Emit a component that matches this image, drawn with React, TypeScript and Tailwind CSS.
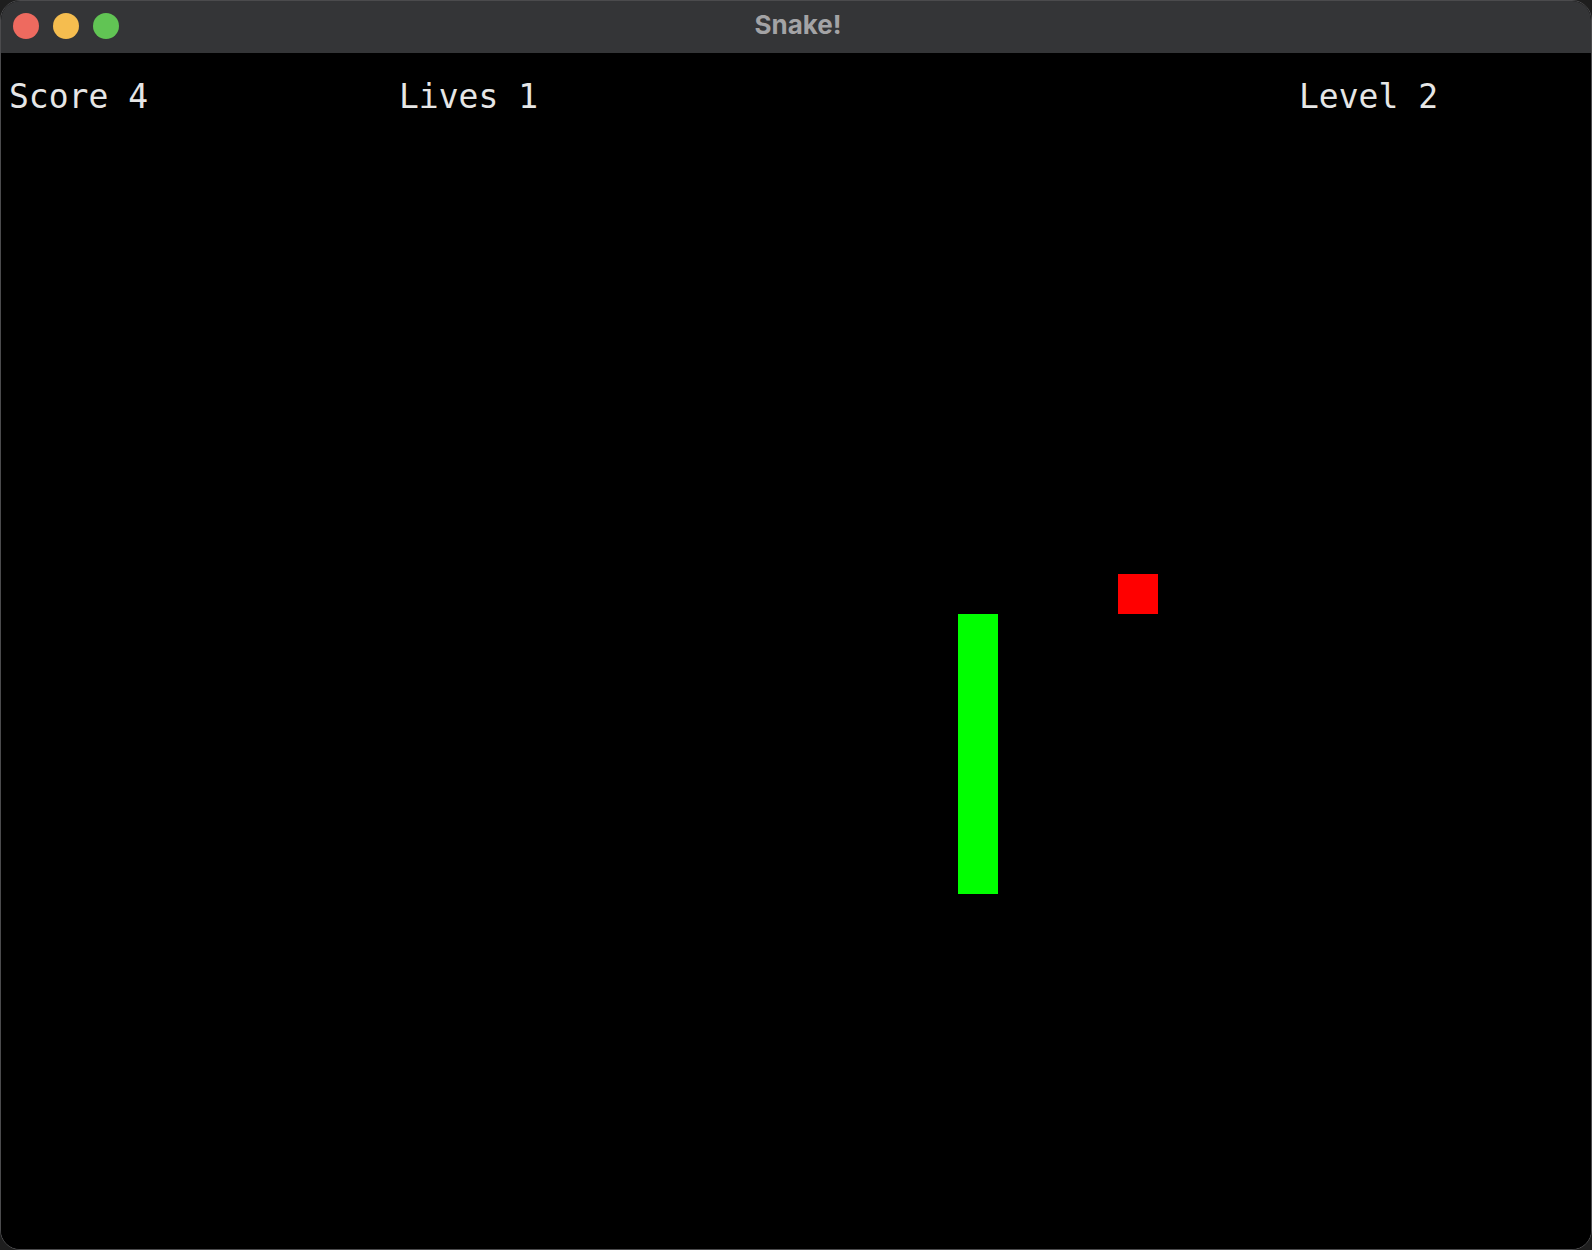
import { useState } from "react";

type Cell = { x: number; y: number };

// positions in px on the board (board starts under the 53px title bar)
const SNAKE: Cell[] = [
  { x: 957, y: 561 },
  { x: 957, y: 601 },
  { x: 957, y: 641 },
  { x: 957, y: 681 },
  { x: 957, y: 721 },
  { x: 957, y: 761 },
  { x: 957, y: 801 },
];
const FOOD: Cell = { x: 1117, y: 521 };

function TrafficLights() {
  return (
    <div className="flex items-center gap-[14px] pb-[2px] pl-[12px]">
      <span className="h-[26px] w-[26px] rounded-full bg-[#ee6a5f]" />
      <span className="h-[26px] w-[26px] rounded-full bg-[#f5bd4f]" />
      <span className="h-[26px] w-[26px] rounded-full bg-[#61c454]" />
    </div>
  );
}

export default function App() {
  const [score] = useState(4);
  const [lives] = useState(1);
  const [level] = useState(2);

  return (
    <div className="h-[1250px] w-[1592px] bg-[#1e1e1e]">
      <div className="flex h-full w-full flex-col overflow-hidden rounded-[20px] border border-[#4b4b4d] bg-black">
        {/* Title bar */}
        <div className="relative flex h-[52px] shrink-0 items-center bg-[#343537]">
          <TrafficLights />
          <div
            className="absolute inset-0 flex items-center justify-center pb-[6px] pl-[4px] text-[26px] font-bold text-[#a3a3a5]"
            style={{ fontFamily: "Inter, 'Noto Sans', sans-serif" }}
          >
            Snake!
          </div>
        </div>

        {/* Board */}
        <div className="relative flex-1 bg-black">
          <div
            className="flex pl-[8px] pt-[25px] text-[33px] leading-[38px] text-[#e6e6e6]"
            style={{ fontFamily: "'DejaVu Sans Mono', 'Liberation Mono', monospace" }}
          >
            <div className="w-[390px]">Score {score}</div>
            <div className="w-[900px]">Lives {lives}</div>
            <div>Level {level}</div>
          </div>

          {SNAKE.map((c, i) => (
            <div
              key={i}
              className="absolute h-[40px] w-[40px] bg-[#00ff00]"
              style={{ left: c.x, top: c.y }}
            />
          ))}
          <div
            className="absolute h-[40px] w-[40px] bg-[#ff0000]"
            style={{ left: FOOD.x, top: FOOD.y }}
          />
        </div>
      </div>
    </div>
  );
}
